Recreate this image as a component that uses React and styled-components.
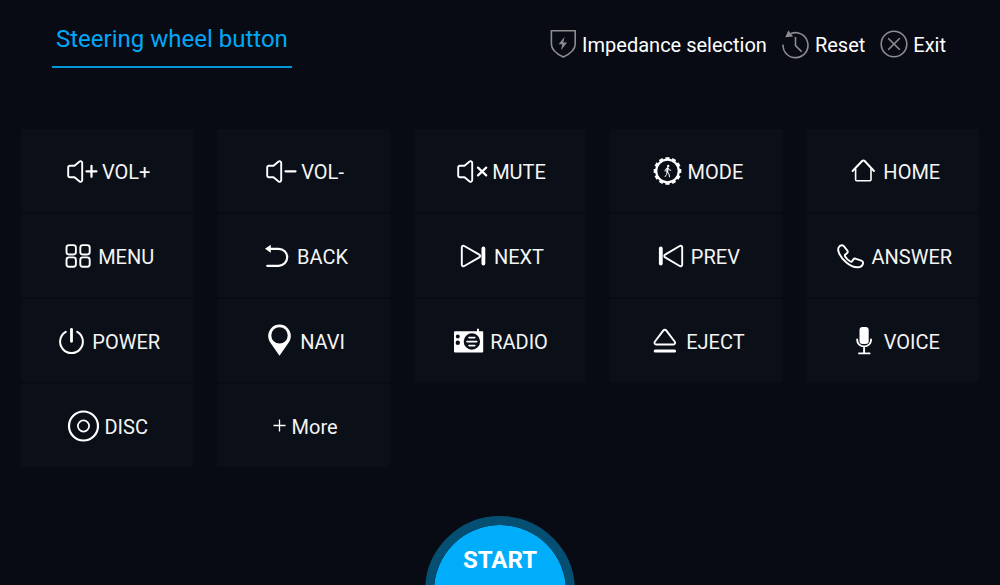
import React from "react";
import styled, { createGlobalStyle } from "styled-components";

const teeth = [0, 30, 60, 90, 120, 150, 180, 210, 240, 270, 300, 330];

const speaker = (
  <path d="M8.5 10.8H3.8a1.6 1.6 0 0 0-1.6 1.6v8.2a1.6 1.6 0 0 0 1.6 1.6h4.7l5.1 4.3a1.6 1.6 0 0 0 2.6-1.2V7.7a1.6 1.6 0 0 0-2.6-1.2z" />
);

const icons = {
  volUp: (
    <>
      {speaker}
      <path d="M20.5 16.3h10M25.5 10.8v11" strokeWidth="2.2" />
    </>
  ),
  volDown: (
    <>
      {speaker}
      <path d="M20.5 16.3h10" strokeWidth="2.2" />
    </>
  ),
  mute: (
    <>
      {speaker}
      <path d="M22 12.6l8.2 7.8M30.2 12.6L22 20.4" strokeWidth="2.2" />
    </>
  ),
  mode: (
    <>
      <circle cx="15.5" cy="16" r="11.3" strokeWidth="2.2" />
      {teeth.map((deg) => (
        <rect
          key={deg}
          x="13.5"
          y="2.2"
          width="4"
          height="2.8"
          fill="currentColor"
          stroke="none"
          transform={`rotate(${deg} 15.5 16)`}
        />
      ))}
      <circle cx="16.2" cy="11" r="1.2" fill="currentColor" stroke="none" />
      <path d="M15.6 13.2l-.4 3.4" strokeWidth="2" />
      <path
        d="M15.6 13l-2.2 1.5-.3 1.6M16.200 13.200l1 1.500 1.600.7M15.200 17l-.6 2.400-1.500 2.200M15.600 17l1.400 2 .5 2.800"
        strokeWidth="1"
      />
    </>
  ),
  home: (
    <>
      <path d="M5.6 16L15.4 5.8a1.4 1.4 0 0 1 2 0L27 16" strokeWidth="2" />
      <path d="M8.6 14v10.800a1 1 0 0 0 1 1h13.400a1 1 0 0 0 1-1V14" strokeWidth="1.6" />
    </>
  ),
  menu: (
    <>
      <rect x="4.5" y="5.1" width="9.4" height="9.4" rx="2.5" />
      <rect x="18.3" y="5.1" width="9.4" height="9.4" rx="2.5" />
      <rect x="4.5" y="17.4" width="9.4" height="9.4" rx="2.5" />
      <rect x="18.3" y="17.4" width="9.4" height="9.4" rx="2.5" />
    </>
  ),
  back: (
    <>
      <path d="M8 8.8h9.7a8.5 8.5 0 0 1 0 17H6.2" strokeWidth="2.2" />
      <path d="M4 8.800l5.800-4v8z" fill="currentColor" stroke="none" />
    </>
  ),
  next: (
    <>
      <path d="M3.8 7.4v17.2a1.6 1.6 0 0 0 2.5 1.4l15-8.6a1.6 1.6 0 0 0 0-2.8l-15-8.600a1.6 1.6 0 0 0-2.5 1.4z" />
      <path d="M25.400 8.400v15.200" strokeWidth="3.800" />
    </>
  ),
  prev: (
    <>
      <path d="M27.2 7.4v17.2a1.6 1.6 0 0 1-2.5 1.4l-14.6-8.6a1.6 1.6 0 0 1 0-2.8l14.6-8.600a1.6 1.6 0 0 1 2.5 1.4z" />
      <path d="M5.800 8.400v15.200" strokeWidth="3.800" />
    </>
  ),
  answer: (
    <path d="M3.6 7.6C4.2 6.3 5.6 5.3 6.8 5.2c1.2-.1 1.9.6 2.6 1.6l2.9 3.7c.8 1.1.5 2-.4 2.8l-1.5 1.2c-.7.7-.7 1.3-.3 2 1.3 2.1 3.1 3.8 5.2 5 .8.4 1.4.3 1.9-.4l1-1.5c.8-1.1 1.7-1.3 2.9-.8l5.2 1.8c1.2.5 2 1.2 1.8 2.5-.3 1.8-1.8 3.6-3.7 4-3.8.7-8.9-1.1-13-4.6-4-3.4-7.2-7.7-8.1-11.7-.2-1.1-.1-2.2.3-3.2z" />
  ),
  power: (
    <>
      <path d="M9.8 6.8a11.4 11.4 0 1 0 11.4 0" strokeWidth="2" />
      <path d="M15.5 4.3v12" strokeWidth="2.800" />
    </>
  ),
  navi: (
    <path
      d="M15.5-.4A11.3 11.3 0 0 0 4.2 10.9c0 2.8 1 4.8 2.4 7.2l8.9 12.6 8.9-12.6c1.4-2.4 2.4-4.4 2.4-7.2A11.3 11.3 0 0 0 15.5-.4zm0 2.6a8.2 8.2 0 1 1 0 16.4 8.2 8.2 0 0 1 0-16.4z"
      fill="currentColor"
      fillRule="evenodd"
      stroke="none"
    />
  ),
  radio: (
    <>
      <path
        d="M1 6.2h22V3.8h2v2.4h3.4a.8.8 0 0 1 .8.8v19.7a.8.8 0 0 1-.8.8H1a1 1 0 0 1-1-1V7.2a1 1 0 0 1 1-1zm16.9 2.1a8.2 8.2 0 1 0 0 16.4 8.2 8.2 0 0 0 0-16.4zM3.8 9.4a2 2 0 1 0 0 4 2 2 0 0 0 0-4zm0 6.2a2.2 2.2 0 1 0 0 4.4 2.2 2.2 0 0 0 0-4.4z"
        fill="currentColor"
        fillRule="evenodd"
        stroke="none"
      />
      <path d="M15 12.6h5.800M13 16.600h9.800M15 20.600h5.800" strokeWidth="1.600" />
    </>
  ),
  eject: (
    <>
      <path d="M13.2 5.6L4.8 16.8a1.7 1.7 0 0 0 1.4 2.7h17.2a1.7 1.7 0 0 0 1.4-2.7L16.4 5.6a2 2 0 0 0-3.2 0z" />
      <path d="M5.2 26h19.4" strokeWidth="3" />
    </>
  ),
  voice: (
    <>
      <rect x="11.5" y="2" width="9.2" height="17" rx="3" fill="currentColor" stroke="none" />
      <path d="M9.2 14.4v.8a6.9 6.2 0 0 0 13.8 0v-.8M16.1 21.6v6M11 28.4h10.6" />
    </>
  ),
  disc: (
    <>
      <circle cx="15.5" cy="16" r="14.5" strokeWidth="2.2" />
      <circle cx="15.5" cy="16" r="5.6" strokeWidth="1.7" />
    </>
  ),
};

const tiles = [
  { label: "VOL+", icon: "volUp" },
  { label: "VOL-", icon: "volDown" },
  { label: "MUTE", icon: "mute" },
  { label: "MODE", icon: "mode" },
  { label: "HOME", icon: "home" },
  { label: "MENU", icon: "menu" },
  { label: "BACK", icon: "back" },
  { label: "NEXT", icon: "next" },
  { label: "PREV", icon: "prev" },
  { label: "ANSWER", icon: "answer" },
  { label: "POWER", icon: "power" },
  { label: "NAVI", icon: "navi" },
  { label: "RADIO", icon: "radio" },
  { label: "EJECT", icon: "eject" },
  { label: "VOICE", icon: "voice" },
  { label: "DISC", icon: "disc" },
];

export default function App() {
  return (
    <Page>
      <GlobalStyle />
      <Header>
        <Title>Steering wheel button</Title>
        <Actions>
          <Action>
            <ActionIcon viewBox="0 0 28 28" aria-hidden="true">
              <path d="M2.4.8h23.800v13.400c0 5.600-5.600 9.800-11.900 12.800C8 24 2.400 19.800 2.400 14.200z" />
              <path
                d="M15.600 6.800L9.600 14.200h3.700l-1.300 6 6.100-7.800h-3.800z"
                fill="currentColor"
                stroke="none"
              />
            </ActionIcon>
            <Label>Impedance selection</Label>
          </Action>
          <Action>
            <ActionIcon viewBox="0 0 28 28" aria-hidden="true">
              <path d="M1 14.6A12.5 12.5 0 1 0 9 3.500" />
              <path d="M6.400.6L3.200 7.200l8-.8z" fill="currentColor" stroke="none" />
              <path d="M13.500 7v8.600l6.200 6.200" />
            </ActionIcon>
            <Label>Reset</Label>
          </Action>
          <Action>
            <ActionIcon viewBox="0 0 28 28" aria-hidden="true">
              <circle cx="14" cy="14" r="12.8" />
              <path d="M8.200 8.200l11.600 11.600M19.800 8.200L8.200 19.800" />
            </ActionIcon>
            <Label>Exit</Label>
          </Action>
        </Actions>
      </Header>
      <Grid>
        {tiles.map((tile) => (
          <Tile key={tile.label}>
            <TileIcon viewBox="0 0 32 32" aria-hidden="true">
              {icons[tile.icon]}
            </TileIcon>
            <Label>{tile.label}</Label>
          </Tile>
        ))}
        <Tile>
          <PlusIcon viewBox="0 0 16 16" aria-hidden="true">
            <path d="M1.500 7.500h12M7.500 1.500v12" />
          </PlusIcon>
          <Label>More</Label>
        </Tile>
      </Grid>
      <Footer>
        <Start>START</Start>
      </Footer>
    </Page>
  );
}

const GlobalStyle = createGlobalStyle`
  * {
    box-sizing: border-box;
  }
  body {
    margin: 0;
    background: #080b13;
  }
  button {
    font-family: inherit;
    border: none;
    cursor: pointer;
  }
`;

const Page = styled.div`
  display: flex;
  flex-direction: column;
  min-height: 100vh;
  font-family: Roboto, "Liberation Sans", sans-serif;
  color: #fff;
  background: #080b13;
`;

const Header = styled.header`
  display: flex;
  align-items: flex-start;
  justify-content: space-between;
  padding: 24px 54px 0 52px;
`;

const Title = styled.h1`
  margin: 0;
  padding: 0 4px 12px;
  font-size: 24px;
  font-weight: 400;
  line-height: 30px;
  color: #00a8f8;
  border-bottom: 2px solid #0096dc;
`;

const Actions = styled.nav`
  display: flex;
  gap: 15px;
  padding-top: 4px;
`;

const Action = styled.button`
  display: flex;
  align-items: center;
  gap: 5px;
  height: 32px;
  padding: 0;
  font-size: 20px;
  color: #fff;
  background: none;
`;

const Label = styled.span`
  padding-top: 2px;
  line-height: 24px;
`;

const ActionIcon = styled.svg`
  width: 28px;
  height: 28px;
  overflow: visible;
  color: #8c8d90;
  fill: none;
  stroke: currentColor;
  stroke-width: 1.6;
`;

const Grid = styled.main`
  display: grid;
  grid-template-columns: repeat(5, 1fr);
  gap: 2px 24px;
  padding: 61px 21px 49px;
`;

const Tile = styled.button`
  display: flex;
  align-items: center;
  justify-content: center;
  gap: 4px;
  height: 83px;
  padding: 0 0 0 2px;
  font-size: 20px;
  color: #f4f4f4;
  background: #0b0f18;
  &:hover {
    background: #111826;
  }
`;

const TileIcon = styled.svg`
  width: 32px;
  height: 32px;
  overflow: visible;
  color: #fff;
  fill: none;
  stroke: currentColor;
  stroke-width: 1.9;
  stroke-linecap: round;
  stroke-linejoin: round;
`;

const PlusIcon = styled(TileIcon)`
  width: 16px;
  height: 16px;
  stroke-width: 1.3;
  stroke-linecap: butt;
`;

const Footer = styled.footer`
  display: flex;
  justify-content: center;
  height: 69px;
  margin-top: auto;
  overflow: hidden;
`;

const Start = styled.button`
  flex: none;
  display: flex;
  justify-content: center;
  width: 150px;
  height: 150px;
  padding-top: 21px;
  font-size: 24px;
  font-weight: 700;
  color: #fff;
  background: #00adfb;
  background-clip: padding-box;
  && {
    border: 9px solid #054f73;
  }
  border-radius: 50%;
`;
